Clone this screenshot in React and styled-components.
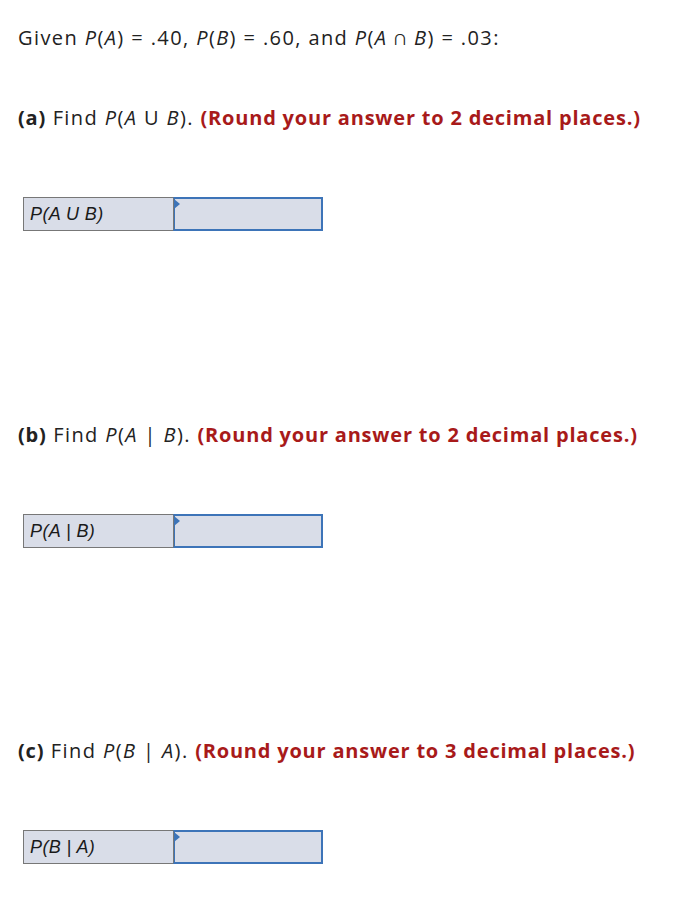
import React from 'react'
import styled, { createGlobalStyle } from 'styled-components'

const GlobalStyle = createGlobalStyle`
  body {
    margin: 0;
    background: #fff;
    font-family: "Open Sans", Lato, sans-serif;
    color: #222;
  }
`

const Page = styled.div`
  padding: 24px 18px 0 18px;
`

const Line = styled.p`
  margin: 0 0 ${(p) => p.gap || 0}px 0;
  font-size: 20px;
  line-height: 28px;
  letter-spacing: 1.4px;
  white-space: nowrap;
`

const Tag = styled.b`
  font-weight: 700;
  letter-spacing: 0.8px;
`

const Hint = styled.b`
  font-weight: 700;
  letter-spacing: 0.8px;
  color: #a81a1a;
`

const Table = styled.div`
  display: flex;
  width: 300px;
  height: 34px;
  margin: 0 0 ${(p) => p.gap || 0}px 5px;
`

const Label = styled.div`
  width: 150px;
  box-sizing: border-box;
  background: #d9dde8;
  border: 1px solid #777;
  border-right: none;
  display: flex;
  align-items: center;
  padding-left: 6px;
  font-family: "Liberation Sans", Arial, sans-serif;
  font-style: italic;
  font-size: 18px;
  letter-spacing: 0.4px;
  color: #1a1a1a;
`

const Input = styled.div`
  position: relative;
  width: 150px;
  box-sizing: border-box;
  background: #d9dde8;
  border: 2px solid #3d74b8;
  border-left: 1px solid #777;
  box-shadow: inset 1px 0 0 #3d74b8;

  &::before {
    content: '';
    position: absolute;
    left: 0;
    top: 0;
    border-top: 5px solid transparent;
    border-bottom: 5px solid transparent;
    border-left: 6px solid #3d74b8;
  }
`

const Part = ({ tag, expr, places, label, gap }) => (
  <>
    <Line gap={65}>
      <Tag>({tag})</Tag> Find {expr}. <Hint>(Round your answer to {places} decimal places.)</Hint>
    </Line>
    <Table gap={gap}>
      <Label>{label}</Label>
      <Input />
    </Table>
  </>
)

export default function App() {
  return (
    <Page>
      <GlobalStyle />
      <Line gap={52}>
        Given <i>P</i>(<i>A</i>) = .40, <i>P</i>(<i>B</i>) = .60, and <i>P</i>(<i>A</i> ∩ <i>B</i>) = .03:
      </Line>
      <Part tag="a" expr={<><i>P</i>(<i>A</i> U <i>B</i>)</>} places={2} label="P(A U B)" gap={190} />
      <Part tag="b" expr={<><i>P</i>(<i>A</i> | <i>B</i>)</>} places={2} label="P(A | B)" gap={189} />
      <Part tag="c" expr={<><i>P</i>(<i>B</i> | <i>A</i>)</>} places={3} label="P(B | A)" gap={0} />
    </Page>
  )
}
